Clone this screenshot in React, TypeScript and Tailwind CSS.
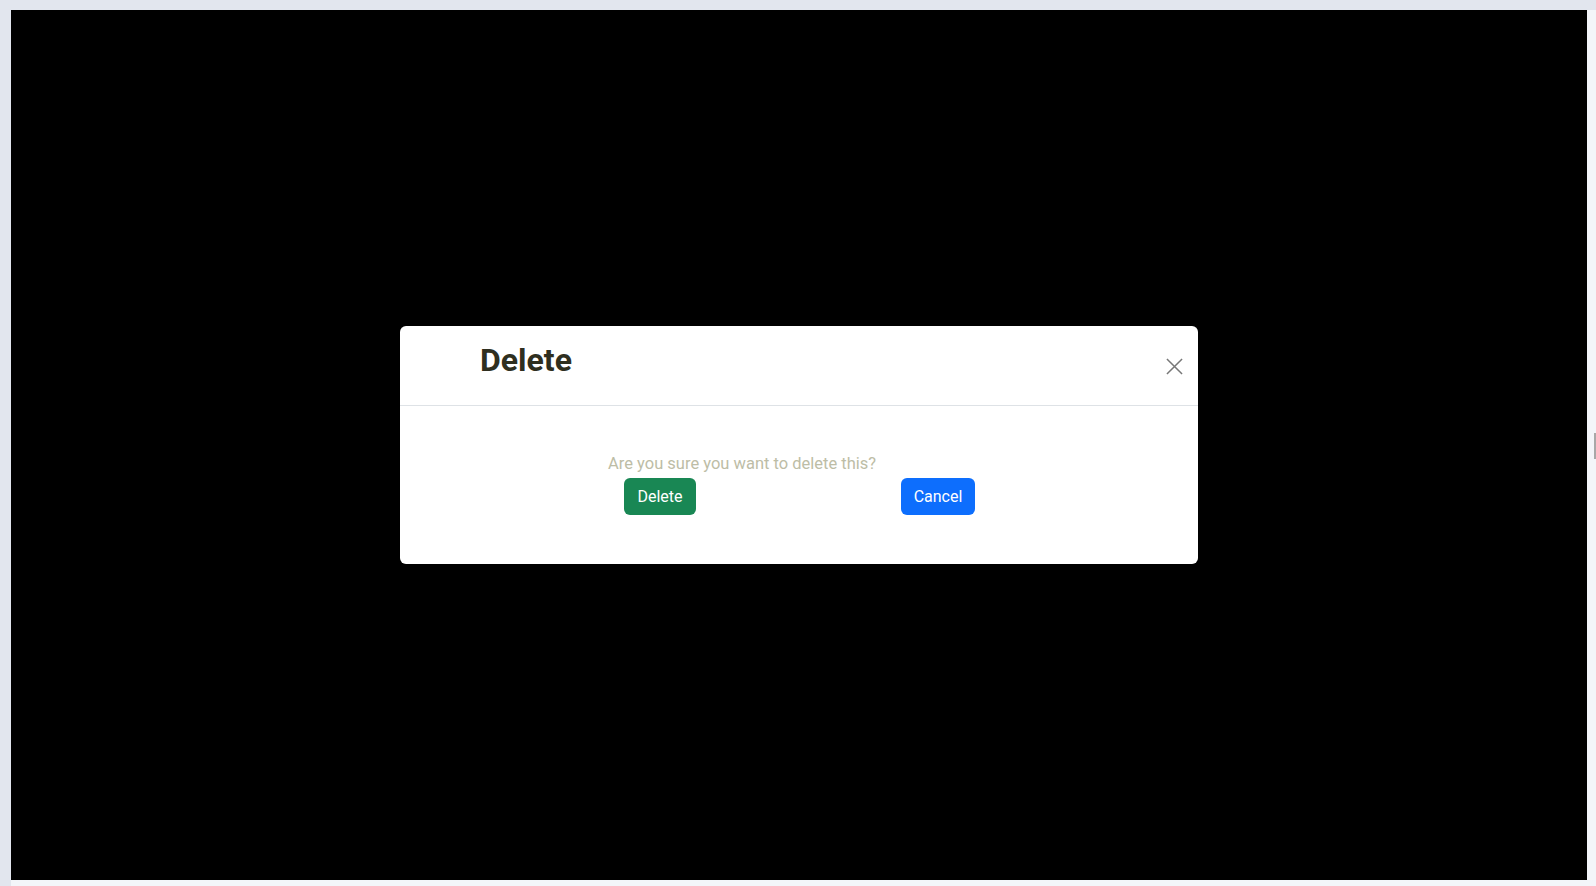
import React from 'react';

const DeleteModal: React.FC = () => {
  return (
    <div className="w-[798px] h-[238px] bg-white rounded-md flex flex-col">
      <div className="h-[80px] border-b border-[#dee2e6] flex items-start justify-between">
        <h2 className="ml-[80px] mt-[14px] text-[32px] leading-[40px] font-bold text-[#2f2f1f]">Delete</h2>
        <button className="mr-[14px] mt-[30px] w-[20px] h-[20px] flex items-center justify-center text-[#777]">
          <svg width="17" height="17" viewBox="0 0 18 18" fill="none" stroke="currentColor" strokeWidth="1.6">
            <path d="M1 1 L17 17 M17 1 L1 17" />
          </svg>
        </button>
      </div>
      <div className="flex-1 flex flex-col pt-[47px]">
        <p className="ml-[208px] text-[16.5px] leading-[22px] text-[#bdbda6]">Are you sure you want to delete this?</p>
        <div className="flex mt-[3px] ml-[224px]">
          <button className="w-[72px] h-[37px] rounded-md bg-[#198754] text-white text-[16px]">Delete</button>
          <button className="ml-[205px] w-[74px] h-[37px] rounded-md bg-[#0d6efd] text-white text-[16px]">Cancel</button>
        </div>
      </div>
    </div>
  );
};

export default function App() {
  return (
    <div className="relative h-screen w-full flex flex-col bg-[#f3f5f9] overflow-hidden" style={{ fontFamily: 'Roboto, "Noto Sans", sans-serif' }}>
      <div className="h-[10px] w-full bg-[#e2e6ee] shrink-0" />
      <div className="flex flex-1">
        <div className="w-[11px] bg-[#e2e6ee] shrink-0" />
        <div className="w-[1576px] h-[870px] bg-black flex items-center justify-center shrink-0">
          <DeleteModal />
        </div>
      </div>
      <div className="absolute right-0 top-[433px] w-[2px] h-[26px] bg-[#a8a8a8]" />
    </div>
  );
}
